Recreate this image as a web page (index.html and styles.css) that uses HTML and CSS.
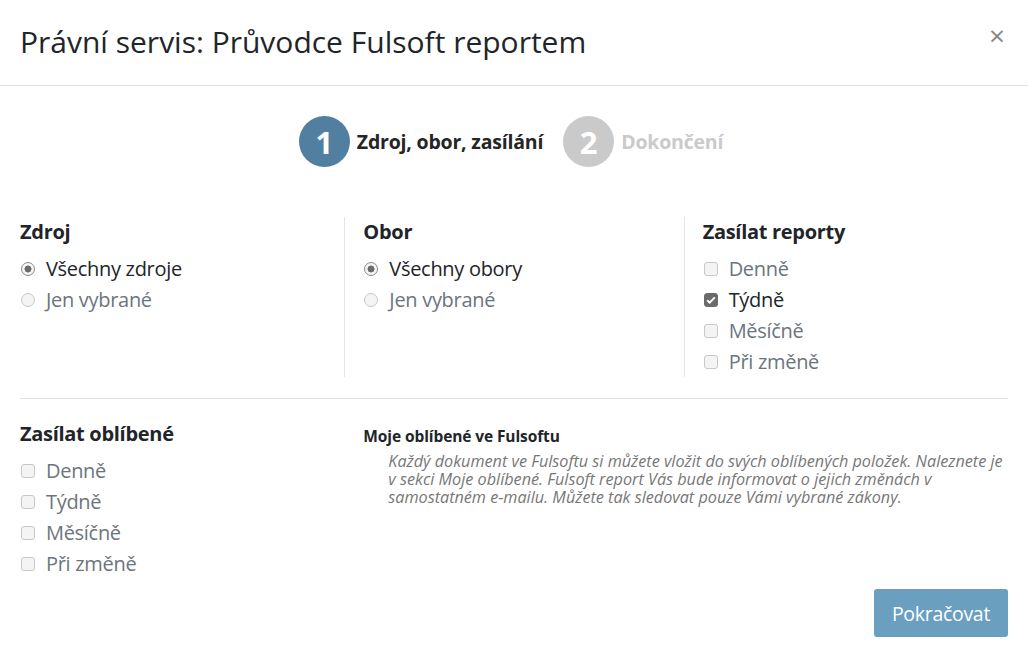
FILE: index.html
```html
<!DOCTYPE html>
<html lang="cs">
<head>
  <meta charset="UTF-8" />
  <meta name="viewport" content="width=device-width, initial-scale=1.0" />
  <title>Průvodce Fulsoft reportem</title>
  <link rel="stylesheet" href="styles.css">
</head>
<body>
<div class="modal">
  <div class="modal-header">
    <h1>Právní servis: Průvodce Fulsoft reportem</h1>
    <span class="close">&times;</span>
  </div>

  <div class="modal-body">
    <div class="steps">
      <div class="step active"><span class="num">1</span><span class="label">Zdroj, obor, zasílání</span></div>
      <div class="step"><span class="num">2</span><span class="label">Dokončení</span></div>
    </div>

    <div class="row top">
      <div class="col">
        <h3>Zdroj</h3>
        <div class="opt checked"><span class="radio"></span>Všechny zdroje</div>
        <div class="opt"><span class="radio"></span>Jen vybrané</div>
      </div>
      <div class="col divided">
        <h3>Obor</h3>
        <div class="opt checked"><span class="radio"></span>Všechny obory</div>
        <div class="opt"><span class="radio"></span>Jen vybrané</div>
      </div>
      <div class="col divided">
        <h3>Zasílat reporty</h3>
        <div class="opt"><span class="check"></span>Denně</div>
        <div class="opt checked"><span class="check"></span>Týdně</div>
        <div class="opt"><span class="check"></span>Měsíčně</div>
        <div class="opt"><span class="check"></span>Při změně</div>
      </div>
    </div>

    <hr>

    <div class="row bottom">
      <div class="col">
        <h3>Zasílat oblíbené</h3>
        <div class="opt"><span class="check"></span>Denně</div>
        <div class="opt"><span class="check"></span>Týdně</div>
        <div class="opt"><span class="check"></span>Měsíčně</div>
        <div class="opt"><span class="check"></span>Při změně</div>
      </div>
      <div class="col wide">
        <h4>Moje oblíbené ve Fulsoftu</h4>
        <p class="note">Každý dokument ve Fulsoftu si můžete vložit do svých oblíbených položek. Naleznete je v sekci Moje oblíbené. Fulsoft report Vás bude informovat o jejich změnách v samostatném e-mailu. Můžete tak sledovat pouze Vámi vybrané zákony.</p>
      </div>
    </div>

    <div class="actions">
      <button class="btn">Pokračovat</button>
    </div>
  </div>
</div>
</body>
</html>
```

FILE: styles.css
```css
html, body {
  margin: 0;
  padding: 0;
  background: #fff;
  color: #212529;
  font-family: 'Open Sans', 'Noto Sans', sans-serif;
}

.modal {
  width: 1028px;
  height: 656px;
  overflow: hidden;
}

.modal-header {
  display: flex;
  justify-content: space-between;
  align-items: flex-start;
  height: 86px;
  box-sizing: border-box;
  padding: 0 20px;
  border-bottom: 1px solid #e0e0e0;
}

.modal-header h1 {
  margin: 0;
  padding-top: 21px;
  font-size: 30px;
  font-weight: 500;
  line-height: 41px;
}

.close {
  font-size: 28px;
  color: #888;
  line-height: 1;
  padding-top: 21px;
  padding-right: 3px;
}

.modal-body {
  padding: 0 20px;
}

.steps {
  display: flex;
  justify-content: center;
  gap: 20px;
  padding: 30px 6px 0 0;
}

.step {
  display: flex;
  align-items: center;
  height: 51px;
  gap: 7px;
  font-size: 19.5px;
  font-weight: 700;
  color: #cacaca;
  letter-spacing: -0.2px;
}

.step .num {
  width: 51px;
  height: 51px;
  border-radius: 50%;
  background: #cacaca;
  color: #fff;
  font-size: 31px;
  display: flex;
  align-items: center;
  justify-content: center;
  letter-spacing: 0;
}

.step.active { color: #252525; }
.step.active .num { background: #517fa0; }

.row {
  display: flex;
  margin: 0 -15px;
}

.col {
  flex: 0 0 33.3333%;
  box-sizing: border-box;
  padding: 0 15px;
}

.col.divided {
  border-left: 1px solid #e5e5e5;
  padding-left: 18px;
}

.col.wide {
  flex: 0 0 66.6667%;
  padding-left: 19px;
}

.row.top {
  margin-top: 50px;
  height: 160px;
}

h3 {
  margin: 0 0 8px;
  padding-top: 1px;
  font-size: 20px;
  line-height: 27px;
  font-weight: 700;
  letter-spacing: -0.3px;
}

.opt {
  display: flex;
  align-items: center;
  height: 31px;
  font-size: 20px;
  color: #6c757d;
  letter-spacing: -0.3px;
}

.opt.checked { color: #212529; }

.radio, .check {
  width: 14px;
  height: 14px;
  box-sizing: border-box;
  border: 1px solid #c8c8c8;
  background: #f4f4f4;
  margin: 0 11px 0 1px;
  flex-shrink: 0;
}

.radio { border-radius: 50%; }
.check { border-radius: 3px; }

.opt.checked .radio {
  border-color: #8a8a8a;
  background: radial-gradient(circle, #6b6b6b 3.2px, #f4f4f4 3.8px);
}

.opt.checked .check {
  border-color: #6b6b6b;
  background: #6b6b6b url("data:image/svg+xml,%3Csvg xmlns='http://www.w3.org/2000/svg' viewBox='0 0 14 14'%3E%3Cpath d='M3.2 7.2l2.5 2.4L10.8 4.4' fill='none' stroke='white' stroke-width='1.9'/%3E%3C/svg%3E") center / 14px no-repeat;
}

hr {
  border: 0;
  border-top: 1px solid #e3e3e3;
  margin: 21px 0 0;
}

.row.bottom {
  margin-top: 20px;
}

h4 {
  margin: 7px 0 5px;
  font-size: 15.5px;
  line-height: 21px;
  font-weight: 700;
  letter-spacing: -0.1px;
}

.note {
  margin: 0;
  padding-left: 25px;
  font-size: 16.2px;
  line-height: 18px;
  font-style: italic;
  color: #777;
}

.actions {
  display: flex;
  justify-content: flex-end;
  margin-top: 10px;
}

.btn {
  width: 134px;
  height: 48px;
  border: 0;
  border-radius: 3px;
  background: #6a9fbf;
  color: #fff;
  font-family: inherit;
  font-size: 19.5px;
  letter-spacing: -0.3px;
}
```
